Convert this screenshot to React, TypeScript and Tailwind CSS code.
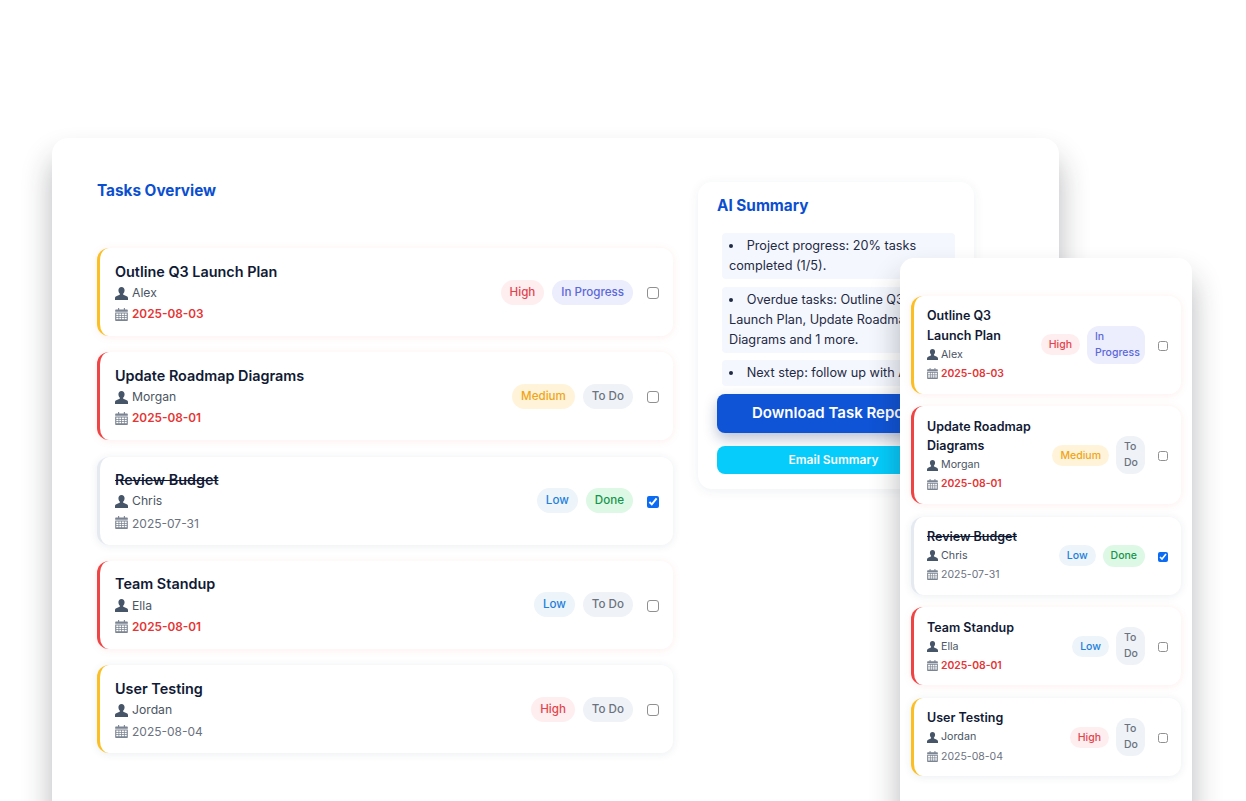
import React from "react";

type Task = {
  title: string;
  who: string;
  date: string;
  priority: "High" | "Medium" | "Low";
  status: "In Progress" | "To Do" | "Done";
  late: boolean;
  bar: string;
  done?: boolean;
};

const TASKS: Task[] = [
  { title: "Outline Q3 Launch Plan", who: "Alex", date: "2025-08-03", priority: "High", status: "In Progress", late: true, bar: "border-l-[#fbbf24]" },
  { title: "Update Roadmap Diagrams", who: "Morgan", date: "2025-08-01", priority: "Medium", status: "To Do", late: true, bar: "border-l-[#ef4444]" },
  { title: "Review Budget", who: "Chris", date: "2025-07-31", priority: "Low", status: "Done", late: false, bar: "border-l-[#e5e9f0]", done: true },
  { title: "Team Standup", who: "Ella", date: "2025-08-01", priority: "Low", status: "To Do", late: true, bar: "border-l-[#ef4444]" },
  { title: "User Testing", who: "Jordan", date: "2025-08-04", priority: "High", status: "To Do", late: false, bar: "border-l-[#fbbf24]" },
];

const PILL_COLORS: Record<string, string> = {
  High: "bg-[#ffeef0] text-[#e2444c]",
  Medium: "bg-[#fff3d9] text-[#f0a516]",
  Low: "bg-[#edf4fa] text-[#2180dc]",
  "In Progress": "bg-[#ecedfd] text-[#5b68d9]",
  "To Do": "bg-[#eff2f6] text-[#6b7280]",
  Done: "bg-[#def8e6] text-[#16944a]",
};

function UserIcon({ size }: { size: number }) {
  return (
    <svg width={size} height={size} viewBox="0 0 14 14" className="shrink-0 text-[#475569]">
      <path
        fill="currentColor"
        d="M7 0c2.100 0 3.300 1.500 3.300 3.600 0 1.500-.6 2.800-1.400 3.500-.3.400-.3 1 .1 1.300l3.600 1.600c.9.400 1.400 1.100 1.400 2V14H0v-2c0-.9.500-1.600 1.400-2L5 8.400c.4-.3.400-.9.100-1.300C4.300 6.400 3.700 5.100 3.700 3.600 3.700 1.500 4.900 0 7 0z"
      />
    </svg>
  );
}

function CalendarIcon({ size }: { size: number }) {
  return (
    <svg width={size} height={size} viewBox="0 0 14 14" className="shrink-0 text-[#7b8492]">
      <path fill="currentColor" d="M1 1.600h2.300V0h1.200v1.600h5V0h1.200v1.600H13a.8.8 0 0 1 .8.800V4H.2V2.400A.8.8 0 0 1 1 1.600z" />
      <path
        fill="currentColor"
        fillRule="evenodd"
        d="M.2 4.800h13.600v8.400a.8.8 0 0 1-.8.800H1a.8.8 0 0 1-.8-.8V4.800zM1.400 6v1.500h2.400V6H1.400zm3.200 0v1.500h2.100V6H4.600zm2.900 0v1.500h2.100V6H7.500zm2.900 0v1.500h2.200V6h-2.200zM1.400 8.300v1.500h2.400V8.300H1.400zm3.200 0v1.500h2.100V8.300H4.600zm2.900 0v1.500h2.100V8.300H7.500zm2.900 0v1.500h2.200V8.300h-2.200zM1.400 10.600v1.600h2.400v-1.600H1.400zm3.200 0v1.600h2.100v-1.600H4.600zm2.900 0v1.600h2.100v-1.600H7.500zm2.900 0v1.600h2.200v-1.600h-2.200z"
      />
    </svg>
  );
}

function cardShadow(task: Task) {
  return task.late
    ? "shadow-[0_1px_8px_rgba(239,68,68,0.09)]"
    : "shadow-[0_1px_8px_rgba(30,50,90,0.09)]";
}

// big list on the left
function TaskCard({ task }: { task: Task }) {
  return (
    <div className={`flex h-[88px] items-center rounded-xl border-l-[3px] bg-white pl-[15px] pr-[14px] ${task.bar} ${cardShadow(task)}`}>
      <div className="mt-px flex-1">
        <div className={`mb-px text-[14.400px] font-semibold leading-[21px] text-[#111a35] ${task.done ? "line-through" : ""}`}>{task.title}</div>
        <div className="flex h-[21px] items-center gap-1 text-[12.200px] text-[#4b5563]">
          <UserIcon size={13} />
          {task.who}
        </div>
        <div className="flex h-[21px] items-center gap-1">
          <CalendarIcon size={13} />
          <span className={`mt-[2px] ${task.late ? "text-[11.800px] font-semibold text-[#e53535]" : "text-[12px] text-[#6b7280]"}`}>{task.date}</span>
        </div>
      </div>
      <div className="flex items-center gap-2">
        <span className={`rounded-full px-[9px] py-[4px] text-[11.600px] font-medium leading-[17px] ${PILL_COLORS[task.priority]}`}>{task.priority}</span>
        <span className={`rounded-full px-[9px] py-[4px] text-[11.600px] font-medium leading-[17px] ${PILL_COLORS[task.status]}`}>{task.status}</span>
      </div>
      <input
        type="checkbox"
        defaultChecked={task.done}
        className={`ml-[14px] mt-[2px] h-3 w-3 shrink-0 accent-[#0b6bf2] ${task.done ? "" : "appearance-none rounded-[3px] border-[1.500px] border-[#909090]"}`}
      />
    </div>
  );
}

// same list squeezed into the narrow window
function SmallTaskCard({ task }: { task: Task }) {
  const statusWidth = task.status === "In Progress" ? "w-[58px]" : task.status === "To Do" ? "w-[29px]" : "";
  const statusShape = task.status === "Done" ? "rounded-full" : "rounded-xl";
  return (
    <div className={`flex items-center rounded-xl border-l-[3px] bg-white py-[10.250px] pl-[13px] pr-[13px] ${task.bar} ${cardShadow(task)}`}>
      <div className="min-w-0 flex-1 pr-[6px]">
        <div className={`text-[12.500px] font-semibold leading-[19.500px] text-[#111a35] ${task.done ? "line-through" : ""}`}>{task.title}</div>
        <div className="flex h-[19px] items-center gap-[3px] text-[10.700px] text-[#4b5563]">
          <UserIcon size={11} />
          {task.who}
        </div>
        <div className="flex h-[19px] items-center gap-[3px]">
          <CalendarIcon size={11} />
          <span className={task.late ? "text-[10.400px] font-semibold text-[#e53535]" : "text-[10.500px] text-[#6b7280]"}>{task.date}</span>
        </div>
      </div>
      <div className="flex shrink-0 items-center gap-[7px]">
        <span className={`rounded-full px-2 py-[3px] text-[10.500px] font-medium leading-[15px] ${PILL_COLORS[task.priority]}`}>{task.priority}</span>
        <span className={`${statusWidth} ${statusShape} px-2 py-[3px] text-[10.500px] font-medium leading-4 ${PILL_COLORS[task.status]}`}>{task.status}</span>
      </div>
      <input
        type="checkbox"
        defaultChecked={task.done}
        className={`ml-[13px] mt-[2px] h-[10px] w-[10px] shrink-0 accent-[#0b6bf2] ${task.done ? "" : "appearance-none rounded-[2.500px] border border-[#909090]"}`}
      />
    </div>
  );
}

function AiSummary() {
  return (
    <div className="h-[307px] w-[276px] rounded-[14px] bg-white px-[19px] pt-[14px] shadow-[0_2px_12px_rgba(30,50,90,0.07)]">
      <h3 className="text-[15.300px] font-bold leading-[20px] text-[#0b4fd0]">AI Summary</h3>
      <ul className="ml-[5px] mt-[17px] flex list-inside list-disc flex-col gap-[7.500px] text-[12.700px] leading-5 text-[#1f2a44]">
        <li className="rounded bg-[#f4f7fd] px-[7px] py-[3px]">Project progress: 20% tasks completed (1/5).</li>
        <li className="rounded bg-[#f4f7fd] px-[7px] py-[3px]">Overdue tasks: Outline Q3 Launch Plan, Update Roadmap Diagrams and 1 more.</li>
        <li className="whitespace-nowrap rounded bg-[#f4f7fd] px-[7px] py-[3px]">Next step: follow up with Alex.</li>
      </ul>
      <button className="mt-2 h-[39px] w-[233px] rounded-lg bg-[#0f53d6] text-[15px] font-semibold text-white shadow-[0_6px_14px_rgba(15,40,100,0.28)]">
        Download Task Report
      </button>
      <button className="mt-[13px] h-[28px] w-[233px] rounded-lg bg-[#05ccfb] text-[12px] font-semibold text-white">
        Email Summary
      </button>
    </div>
  );
}

export default function App() {
  return (
    <div className="relative h-[801px] w-[1246px] overflow-hidden bg-white pl-[52px] pt-[138px] font-[Inter,sans-serif]">
      <div className="flex h-[720px] w-[1007px] gap-[25px] rounded-[16px] bg-white pl-[45px] pt-[44px] shadow-[0_20px_30px_rgba(30,35,45,0.32)]">
        <div className="w-[576px]">
          <h2 className="mt-px text-[15.300px] font-bold leading-[16px] text-[#0b4fd0]">Tasks Overview</h2>
          <div className="mt-[49px] flex flex-col gap-[16.300px]">
            {TASKS.map((task) => (
              <TaskCard key={task.title} task={task} />
            ))}
          </div>
        </div>
        <AiSummary />
      </div>

      <div className="absolute left-[900px] top-[258px] flex h-[600px] w-[292px] flex-col gap-[12.800px] rounded-[14px] bg-white px-[11px] pt-[38px] shadow-[0_20px_30px_rgba(30,35,45,0.32)]">
        {TASKS.map((task) => (
          <SmallTaskCard key={task.title} task={task} />
        ))}
      </div>
    </div>
  );
}
